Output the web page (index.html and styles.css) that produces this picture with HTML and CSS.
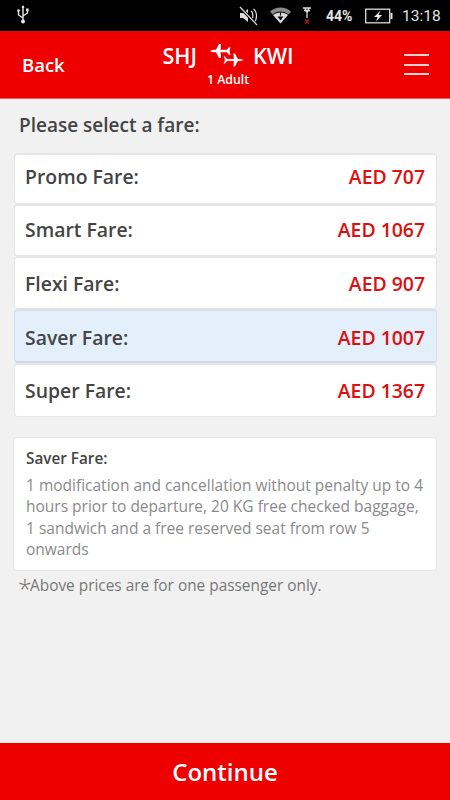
FILE: index.html
```html
<!DOCTYPE html>
<html lang="en">
<head>
<meta charset="utf-8">
<title>Select a fare</title>
<link rel="stylesheet" href="styles.css">
</head>
<body>
<div class="app">
  <div class="status">
    <svg class="usb" width="14" height="20" viewBox="0 0 14 20"><path d="M7 1v15M7 13L2.500 10V6M7 11l4.500-3V5" fill="none" stroke="#e8e8e8" stroke-width="1.400"/><path d="M7 0l-1.500 3h3z" fill="#e8e8e8"/><circle cx="7" cy="16.500" r="2" fill="#e8e8e8"/><circle cx="2.500" cy="5.500" r="1.300" fill="#e8e8e8"/><rect x="10" y="3.500" width="2.600" height="2.600" fill="#e8e8e8"/></svg>
    <div class="status-right">
      <svg class="mute" width="20" height="20" viewBox="0 0 20 20"><path d="M1 7h3l5-4v13l-5-4H1z" fill="#ddd"/><path d="M12 5c2.500 1.500 2.500 8 0 10M14.500 3c4 3 4 11 0 14" fill="none" stroke="#ddd" stroke-width="1.200"/><path d="M1 1l17 18" stroke="#000" stroke-width="3"/><path d="M1 1l17 18" stroke="#ddd" stroke-width="1.200"/></svg>
      <svg class="wifi" width="21" height="17" viewBox="0 0 21 17"><path d="M0 4.500C6-1 15-1 21 4.500l-2.500 3C14 3.500 7 3.500 2.500 7.500z" fill="#8a8a8a"/><path d="M3 8l7.500 8.500L18 8C14 4.500 7 4.500 3 8z" fill="#ddd"/><path d="M7.500 9.500h6l-3 4z" fill="#000"/><path d="M10.500 5.500v3" stroke="#000" stroke-width="1.200"/></svg>
      <span class="signal">
        <svg width="10" height="17" viewBox="0 0 10 17"><path d="M1 1h8M2 3.500h6M3 1l2 5 2-5M5 5v6" fill="none" stroke="#ddd" stroke-width="1.300"/><path d="M3 12.500l4 4M7 12.500l-4 4" stroke="#c11" stroke-width="1.100"/></svg>
      </span>
      <span class="pct">44%</span>
      <svg class="batt" width="28" height="16" viewBox="0 0 28 16"><rect x="0.700" y="1.200" width="24" height="13.600" fill="none" stroke="#ddd" stroke-width="1.300"/><rect x="25.500" y="5" width="2" height="6" fill="#ddd"/><path d="M15.500 2.500L9 9h3.500L11 13.500 17 7h-3.500z" fill="#eee"/></svg>
      <span class="time">13:18</span>
    </div>
  </div>
  <header class="topbar">
    <span class="back">Back</span>
    <div class="route">
      <div class="cities">
        <span>SHJ</span>
        <svg class="planes" width="34" height="24" viewBox="0 0 34 24">
          <path d="M0 7Q2 5.700 4 5.700H6L9 0h2l-.5 5.700H17L19 3h1.500l-1 4 1 4H19l-2-2.700h-6.500L11 14H9L6 8.300H4Q2 8.300 0 7z" fill="#fff"/>
          <path d="M0 7Q2 5.700 4 5.700H6L9 0h2l-.5 5.700H17L19 3h1.500l-1 4 1 4H19l-2-2.700h-6.500L11 14H9L6 8.300H4Q2 8.300 0 7z" fill="#fff" stroke="#ee0000" stroke-width=".7" transform="rotate(180 17 11.500)"/>
        </svg>
        <span>KWI</span>
      </div>
      <div class="pax">1 Adult</div>
    </div>
    <div class="menu"><i></i><i></i><i></i></div>
  </header>
  <main class="content">
    <h1 class="title">Please select a fare:</h1>
    <ul class="fares">
      <li class="fare f1"><span>Promo Fare:</span><b>AED 707</b></li>
      <li class="fare f2"><span>Smart Fare:</span><b>AED 1067</b></li>
      <li class="fare f3"><span>Flexi Fare:</span><b>AED 907</b></li>
      <li class="fare f4 selected"><span>Saver Fare:</span><b>AED 1007</b></li>
      <li class="fare f5"><span>Super Fare:</span><b>AED 1367</b></li>
    </ul>
    <section class="detail">
      <h2>Saver Fare:</h2>
      <p>1 modification and cancellation without penalty up to 4 hours prior to departure, 20 KG free checked baggage, 1 sandwich and a free reserved seat from row 5 onwards</p>
    </section>
    <p class="note"><span class="star">*</span>Above prices are for one passenger only.</p>
  </main>
  <button class="continue">Continue</button>
</div>
</body>
</html>
```
FILE: styles.css
```css
* { box-sizing: border-box; }
html, body { margin: 0; padding: 0; }
body { font-family: "Open Sans", "Liberation Sans", sans-serif; background: #f1f1f1; }
.app { width: 450px; height: 800px; display: flex; flex-direction: column; overflow: hidden; }

.status { height: 31px; flex: none; background: #000; display: flex; align-items: center; justify-content: space-between; padding: 0 9px 0 16px; color: #e4e4e4; }
.usb { margin-top: -1px; }
.status-right { display: flex; align-items: center; }
.mute { margin-right: 11px; }
.wifi { margin-right: 11px; }
.signal { display: flex; margin-right: 14px; }
.pct { font-family: "Roboto", sans-serif; font-weight: 700; font-size: 14px; margin-right: 13px; width: 26px; }
.batt { margin-right: 9px; }
.time { font-family: "Roboto", sans-serif; font-size: 15.500px; width: 39px; }

.topbar { height: 68px; flex: none; background: #ee0000; border-bottom: 1px solid #f06060; display: flex; align-items: center; padding: 0 21px 0 22px; color: #fff; }
.back { font-size: 18.500px; font-weight: 600; width: 70px; margin-top: -1px; flex: none; }
.route { flex: 1; display: flex; flex-direction: column; align-items: center; margin-right: 40px; }
.cities { display: flex; align-items: center; font-size: 21.500px; font-weight: 600; line-height: 28px; margin-top: 1px; }
.planes { margin: 0 9px 0 13px; }
.pax { font-size: 12.300px; font-weight: 600; line-height: 16px; margin-top: 2px; }
.menu { width: 25px; flex: none; display: flex; flex-direction: column; gap: 7.500px; }
.menu i { display: block; height: 2px; background: #fbd0d0; }

.content { flex: 1; padding: 0 13px; }
.title { margin: 12px 0 14px 6px; font-size: 19px; font-weight: 600; line-height: 28px; color: #444; }
.fares { list-style: none; margin: 0 0 20px 1px; padding: 0; }
.fare { display: flex; align-items: center; justify-content: space-between; padding: 0 11px 0 10px; background: #fff; border: 1px solid #e6e6e6; border-top: 2px solid #e6e6e6; border-radius: 4px; font-size: 19.400px; }
.fare span { font-weight: 600; color: #444; }
.fare b { font-weight: 600; color: #dc1010; }
.f1 { height: 51px; padding-bottom: 6px; }
.f2 { height: 52px; padding-bottom: 2px; }
.f3 { height: 53px; }
.f4 { height: 54px; padding-top: 2px; }
.f5 { height: 54px; }
.selected { background: #e3f0fb; border-color: #d5e0ea; border-bottom: 2px solid #d0dbe4; }

.detail { background: #fff; border: 1px solid #e6e6e6; border-radius: 3px; padding: 10px 12px 9px; height: 134px; }
.detail h2 { margin: 0 0 7px; font-size: 15.300px; font-weight: 600; line-height: 20px; color: #444; }
.detail p { margin: 0; font-size: 15.500px; line-height: 21.300px; color: #8a8a8a; }
.note { margin: 4px 0 0 5px; font-size: 15.400px; line-height: 22px; color: #777; display: flex; }
.star { font-size: 25px; line-height: 26px; width: 12px; height: 22px; flex: none; font-weight: 300; }

.continue { flex: none; height: 57px; border: 0; background: #ee0000; color: #fff; font-family: inherit; font-size: 24px; font-weight: 600; width: 100%; padding: 0; }
```
